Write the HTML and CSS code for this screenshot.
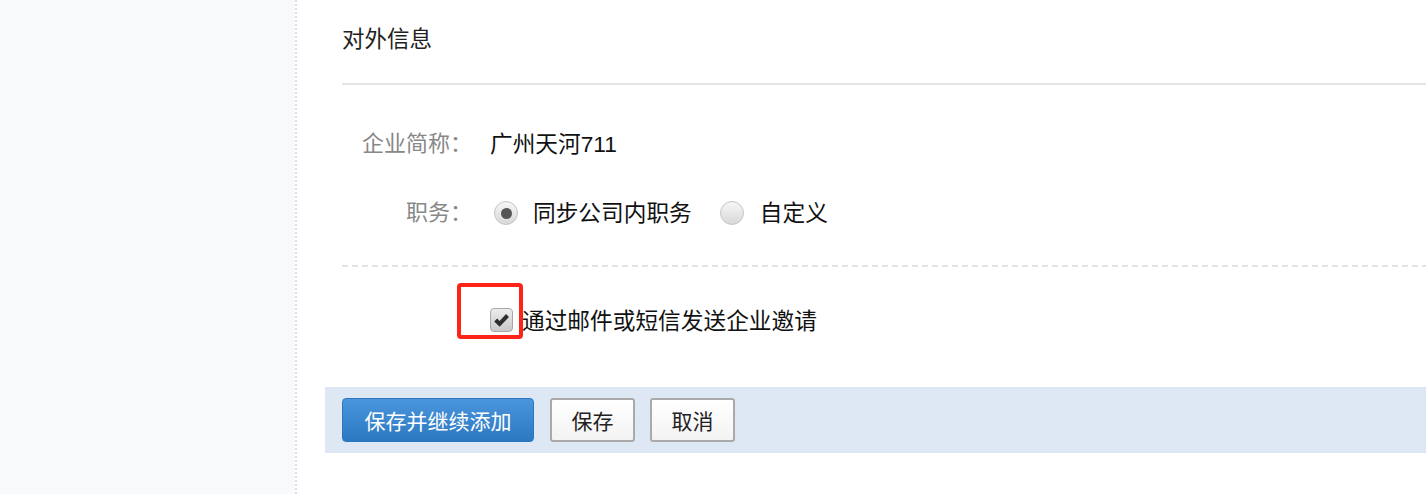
FILE: index.html
```html
<!DOCTYPE html>
<html lang="zh-CN">
<head>
<meta charset="utf-8">
<title>对外信息</title>
<link rel="stylesheet" href="styles.css">
</head>
<body>
<div class="page">
  <aside class="sidebar"></aside>
  <div class="sep"></div>
  <main class="main">
    <section class="content">
      <h2 class="title">对外信息</h2>
      <div class="form">
        <div class="row">
          <span class="label">企业简称：</span>
          <span class="value">广州天河711</span>
        </div>
        <div class="row">
          <span class="label">职务：</span>
          <span class="value options">
            <label class="radio"><span class="radio-btn checked"></span>同步公司内职务</label>
            <label class="radio"><span class="radio-btn"></span>自定义</label>
          </span>
        </div>
      </div>
      <div class="dash"></div>
      <div class="row check-row">
        <span class="label"></span>
        <label class="check">
          <span class="check-wrap">
            <span class="checkbox">
              <svg width="17" height="15" viewBox="0 0 17 15"><path d="M1.2 8.4 L4.2 5.4 L6.6 8 L13 1 L16 4 L6.6 13.8 Z" fill="#2e2e2e"/></svg>
            </span>
            <span class="highlight"></span>
          </span>
          通过邮件或短信发送企业邀请
        </label>
      </div>
    </section>
    <div class="actions">
      <button class="btn btn-primary">保存并继续添加</button>
      <button class="btn">保存</button>
      <button class="btn">取消</button>
    </div>
  </main>
</div>
</body>
</html>
```
FILE: styles.css
```css
* { box-sizing: border-box; }
html, body { margin: 0; padding: 0; background: #fff; }
body {
  font-family: "Liberation Sans", "Noto Sans CJK SC", sans-serif;
  font-size: 22px;
  color: #222;
}
.page { display: flex; height: 494px; overflow: hidden; }
.sidebar { width: 295px; flex: none; background: #f8f9fb; }
.sep {
  width: 2px; flex: none;
  background: #f8f9fb repeating-linear-gradient(to bottom, #dcdfe5 0 2px, #fff 2px 4px);
}
.main { flex: 1; padding-left: 28px; }
.content { padding-left: 17px; }
.title {
  margin: 0;
  height: 85px;
  line-height: 80px;
  font-size: 22.5px;
  font-weight: normal;
  color: #222;
  border-bottom: 2px solid #e4e4e8;
}
.form { padding-top: 39px; display: flex; flex-direction: column; gap: 29px; }
.row { display: flex; align-items: center; height: 40px; line-height: 40px; }
.label { width: 130px; flex: none; text-align: right; color: #888; margin-right: 18px; }
.value { color: #111; font-size: 22.7px; }
.options { display: flex; align-items: center; }
.radio { display: flex; align-items: center; margin-right: 28px; }
.radio-btn {
  width: 24px; height: 24px; border-radius: 50%;
  margin-left: 4px; margin-right: 15px;
  border: 1px solid #c4c4c4;
  background: linear-gradient(#f6f6f6, #d8d8d8);
  display: flex; align-items: center; justify-content: center;
}
.radio-btn.checked::after {
  content: ""; width: 11px; height: 11px; border-radius: 50%; background: #555;
}
.radio + .radio .radio-btn { margin-left: 0; margin-right: 16px; }
.dash {
  margin-top: 32px; height: 2px;
  background: repeating-linear-gradient(to right, #e2e2e8 0 6px, transparent 6px 10px);
}
.check-row { margin-top: 34px; }
.check { display: flex; align-items: center; color: #111; font-size: 22.7px; }
.check-wrap { position: relative; display: flex; margin-right: 9px; margin-top: -2px; }
.checkbox {
  width: 23px; height: 24px; border-radius: 4px;
  border: 1px solid #a8a8a8;
  background: linear-gradient(#ececec, #c9c9c9);
  display: flex; align-items: center; justify-content: center;
}
.highlight {
  position: absolute; left: -33px; top: -25px; width: 66px; height: 56px;
  border: 4px solid #ff2418; border-radius: 4px;
}
.actions {
  margin-top: 46px; height: 66px;
  background: #dee8f4;
  padding: 11px 17px;
  display: flex; gap: 15px;
}
.btn {
  height: 44px; padding: 0 19.5px;
  font-family: inherit; font-size: 21px; color: #222;
  border: 2px solid #aaa; border-radius: 3px;
  background: linear-gradient(#fff, #f3f3f3);
}
.btn-primary {
  padding: 0 21.5px; border: 1px solid #2b76bd; color: #fff; border-radius: 4px;
  background: linear-gradient(#4a95dc, #2c79c1);
  margin-right: 1px;
}
```
